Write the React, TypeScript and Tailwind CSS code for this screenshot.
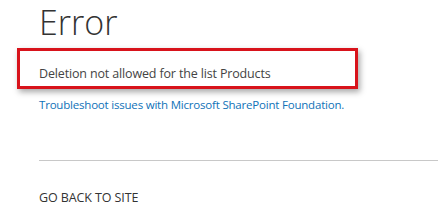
import React from 'react';

export default function App() {
  return (
    <div
      className="w-[438px] h-[214px] bg-white overflow-hidden pl-[39px] text-[#444]"
      style={{ fontFamily: '"Open Sans", "Liberation Sans", sans-serif' }}
    >
      {/* 標題 */}
      <h1 className="pt-[2px] text-[34px] leading-[40px] font-light text-[#333]">Error</h1>

      {/* 錯誤訊息 + 紅框標註 */}
      <div className="relative mt-[23px]">
        <p className="text-[12.5px] leading-[18px] tracking-[-0.15px] text-[#444]">Deletion not allowed for the list Products</p>
        <div className="absolute left-[-22px] top-[-17px] w-[341px] h-[41px] border-[3px] border-[#d8131b] shadow-[2px_3px_6px_rgba(0,0,0,0.35)] pointer-events-none" />
      </div>

      <a href="#" className="block mt-[13px] text-[11.5px] leading-[17px] tracking-[-0.2px] text-[#0f72b8]">
        Troubleshoot issues with Microsoft SharePoint Foundation.
      </a>

      <hr className="mt-[47px] border-0 border-t border-[#c8c8c8]" />

      <div className="mt-[28px] text-[12.5px] leading-[18px] tracking-[-0.1px] text-[#333] uppercase">Go back to site</div>
    </div>
  );
}
